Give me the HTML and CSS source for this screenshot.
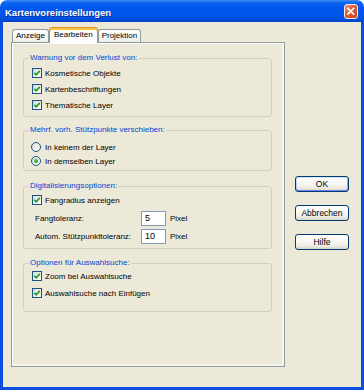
FILE: index.html
```html
<!DOCTYPE html>
<html lang="de">
<head>
<meta charset="utf-8">
<title>Kartenvoreinstellungen</title>
<link rel="stylesheet" href="styles.css">
</head>
<body>
<div class="window">
  <div class="titlebar">
    <span class="title">Kartenvoreinstellungen</span>
    <span class="close"><svg width="14" height="15" viewBox="0 0 14 15"><path d="M3.5 4 L10 10.5 M10 4 L3.5 10.5" stroke="#fff" stroke-width="2" stroke-linecap="square" fill="none"/></svg></span>
  </div>
  <div class="frame">
    <div class="main">
      <div class="tabs">
        <div class="tab">Anzeige</div>
        <div class="tab active">Bearbeiten</div>
        <div class="tab">Projektion</div>
      </div>
      <div class="panel">
        <fieldset class="group g1">
          <legend>Warnung vor dem Verlust von:</legend>
          <div class="row"><span class="check"><svg width="8" height="8" viewBox="0 0 8 8"><path d="M1.3 3.8 L3.2 5.8 L6.8 1.9" stroke="#21A121" stroke-width="1.7" fill="none"/></svg></span><span>Kosmetische Objekte</span></div>
          <div class="row"><span class="check"><svg width="8" height="8" viewBox="0 0 8 8"><path d="M1.3 3.8 L3.2 5.8 L6.8 1.9" stroke="#21A121" stroke-width="1.7" fill="none"/></svg></span><span>Kartenbeschriftungen</span></div>
          <div class="row"><span class="check"><svg width="8" height="8" viewBox="0 0 8 8"><path d="M1.3 3.8 L3.2 5.8 L6.8 1.9" stroke="#21A121" stroke-width="1.7" fill="none"/></svg></span><span>Thematische Layer</span></div>
        </fieldset>
        <fieldset class="group g2">
          <legend>Mehrf. vorh. Stützpunkte verschieben:</legend>
          <div class="row rrow"><span class="radio"></span><span>In keinem der Layer</span></div>
          <div class="row rrow"><span class="radio on"></span><span>In demselben Layer</span></div>
        </fieldset>
        <fieldset class="group g3">
          <legend>Digitalisierungsoptionen:</legend>
          <div class="row"><span class="check"><svg width="8" height="8" viewBox="0 0 8 8"><path d="M1.3 3.8 L3.2 5.8 L6.8 1.9" stroke="#21A121" stroke-width="1.7" fill="none"/></svg></span><span>Fangradius anzeigen</span></div>
          <div class="field"><span class="flabel">Fangtoleranz:</span><span class="num">5</span><span class="unit">Pixel</span></div>
          <div class="field"><span class="flabel">Autom. Stützpunkttoleranz:</span><span class="num">10</span><span class="unit">Pixel</span></div>
        </fieldset>
        <fieldset class="group g4">
          <legend>Optionen für Auswahlsuche:</legend>
          <div class="row"><span class="check"><svg width="8" height="8" viewBox="0 0 8 8"><path d="M1.3 3.8 L3.2 5.8 L6.8 1.9" stroke="#21A121" stroke-width="1.7" fill="none"/></svg></span><span>Zoom bei Auswahlsuche</span></div>
          <div class="row"><span class="check"><svg width="8" height="8" viewBox="0 0 8 8"><path d="M1.3 3.8 L3.2 5.8 L6.8 1.9" stroke="#21A121" stroke-width="1.7" fill="none"/></svg></span><span>Auswahlsuche nach Einfügen</span></div>
        </fieldset>
      </div>
    </div>
    <div class="buttons">
      <button class="btn default">OK</button>
      <button class="btn">Abbrechen</button>
      <button class="btn">Hilfe</button>
    </div>
  </div>
</div>
</body>
</html>
```
FILE: styles.css
```css
html, body {
  margin: 0;
  padding: 0;
  background: #ffffff;
}
body {
  width: 364px;
  height: 390px;
  font-family: "Liberation Sans", Arial, sans-serif;
  font-size: 8px;
  color: #000;
}
.window {
  width: 364px;
  height: 390px;
  display: flex;
  flex-direction: column;
  border-radius: 7px 7px 0 0;
  overflow: hidden;
}
.titlebar {
  height: 22px;
  flex: none;
  display: flex;
  align-items: center;
  padding: 0 6px 0 5px;
  box-sizing: border-box;
  background: linear-gradient(to bottom, #3D8DF5 0%, #0A62EE 14%, #0058EE 35%, #0055E8 70%, #004BDC 90%, #0040C8 100%);
}
.title {
  flex: 1;
  color: #fff;
  font-weight: bold;
  font-size: 9.5px;
  padding-top: 3px;
  text-shadow: 1px 1px 0 #0A2A9A;
}
.close {
  width: 14px;
  height: 15px;
  box-sizing: border-box;
  border: 1px solid #F4E8E4;
  border-radius: 3px;
  background: linear-gradient(135deg, #EC9A80 0%, #E0603C 40%, #C9421C 100%);
  display: flex;
  align-items: center;
  justify-content: center;
  margin-top: 1px;
}
.close svg { display: block; }
.frame {
  flex: 1;
  display: flex;
  background: #ECE9D8;
  border: 3px solid #0B4FE0;
  border-top: 0;
  padding: 5px 0 0 8px;
}
.main {
  width: 274px;
  display: flex;
  flex-direction: column;
}
.tabs {
  display: flex;
  align-items: flex-end;
  height: 16px;
  padding-left: 1px;
  margin-bottom: -1px;
  position: relative;
  z-index: 1;
}
.tab {
  height: 13px;
  box-sizing: border-box;
  margin-bottom: 1px;
  padding: 0 3px;
  border: 1px solid #919B9C;
  border-bottom: 0;
  border-radius: 3px 3px 0 0;
  background: linear-gradient(to bottom, #FFFFFF 0%, #F7F7F4 50%, #ECEBE6 100%);
  line-height: 12px;
  white-space: nowrap;
}
.tab.active {
  height: 16px;
  margin-bottom: 0;
  padding: 2px 4px 0;
  border-top: 1px solid #E68B2C;
  box-shadow: inset 0 2px 0 #FFC83C;
  background: #FCFCFE;
  line-height: 9px;
}
.panel {
  height: 325px;
  box-sizing: border-box;
  border: 1px solid #919B9C;
  box-shadow: inset 1px 1px 0 #FFFFFF, inset -2px -2px 0 #F6F5F0;
  background: #ECE9D8;
  padding: 0 12px 0 11px;
}
.group {
  margin: 0;
  min-width: 0;
  border: 1px solid #D0D0BF;
  border-radius: 3px;
  padding: 0 0 0 8px;
}
.group legend {
  padding: 0 1px;
  margin-left: -3px;
  line-height: 10px;
  color: #0046D5;
}
.g1 { margin-top: 10px; padding-top: 2px; padding-bottom: 3px; }
.g2 { margin-top: 8px; padding-top: 5px; padding-bottom: 2px; }
.g3 { margin-top: 10px; padding-top: 1px; padding-bottom: 3px; }
.g4 { margin-top: 9px; padding-top: 0; padding-bottom: 10px; }
.g4 .row + .row { margin-top: 1px; }
.row {
  display: flex;
  align-items: center;
  height: 16px;
  gap: 3px;
  white-space: nowrap;
}
.rrow {
  height: 14px;
  gap: 4px;
}
.check {
  width: 10px;
  height: 10px;
  box-sizing: border-box;
  border: 1px solid #1C5180;
  background: linear-gradient(135deg, #DCDCD7 0%, #F2F2EE 60%, #FFFFFF 100%);
  display: flex;
  align-items: center;
  justify-content: center;
  flex: none;
}
.check svg { display: block; }
.radio {
  width: 10px;
  height: 10px;
  box-sizing: border-box;
  margin-left: -1px;
  border: 1px solid #1C5180;
  border-radius: 50%;
  background: linear-gradient(135deg, #DCDCD7 0%, #F2F2EE 60%, #FFFFFF 100%);
  display: flex;
  align-items: center;
  justify-content: center;
  flex: none;
}
.radio.on::after {
  content: "";
  width: 4px;
  height: 4px;
  border-radius: 50%;
  background: radial-gradient(circle at 35% 35%, #55D055, #21A121 70%);
}
.field {
  display: flex;
  align-items: center;
  height: 18px;
  padding-left: 3px;
  white-space: nowrap;
}
.row + .field { margin-top: 1px; }
.flabel { width: 106px; }
.num {
  width: 25px;
  height: 15px;
  box-sizing: border-box;
  border: 1px solid #7F9DB9;
  background: #fff;
  font-size: 9px;
  line-height: 13px;
  padding-left: 3px;
}
.unit { margin-left: 4px; }
.buttons {
  display: flex;
  flex-direction: column;
  gap: 13px;
  margin: 149px 0 0 10px;
}
.btn {
  width: 54px;
  height: 16px;
  box-sizing: border-box;
  padding: 0;
  border: 1px solid #003C74;
  border-radius: 3px;
  background: linear-gradient(to bottom, #FFFFFF 0%, #F6F6F2 50%, #ECEAE2 80%, #D8D2C6 100%);
  font-family: "Liberation Sans", Arial, sans-serif;
  font-size: 8.5px;
  color: #000;
  line-height: 14px;
}
.btn.default {
  box-shadow: inset 0 1px 0 #CEE7FF, inset 0 -1px 0 #6982EE, inset 1px 0 0 #B8D2F8, inset -1px 0 0 #89ADE4;
}
```
